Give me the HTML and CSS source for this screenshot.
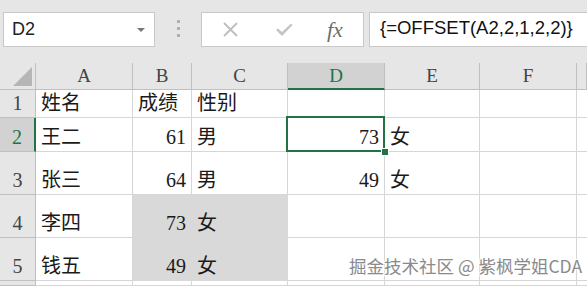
FILE: index.html
```html
<!DOCTYPE html>
<html lang="zh-CN">
<head>
    <meta charset="UTF-8">
    <meta name="viewport" content="width=device-width, initial-scale=1.0">
    <title>OFFSET</title>
    <link rel="stylesheet" href="styles.css">
</head>
<body>
    <!-- Barra de formulas -->
    <div class="toolbar">
        <div class="name-box">
            <span>D2</span>
            <span class="arrow"></span>
        </div>
        <div class="dots"><i></i><i></i><i></i></div>
        <div class="icons">
            <svg class="icon" width="17" height="15" viewBox="0 0 17 15">
                <path d="M2 1 L15 14 M15 1 L2 14" stroke="#bdbdbd" stroke-width="1.8" fill="none"/>
            </svg>
            <svg class="icon" width="18" height="15" viewBox="0 0 18 15">
                <path d="M1 8 L3 6.5 L7 10 L16 1.5 L17.5 3 L7 14 Z" fill="#c4c4c4"/>
            </svg>
            <span class="fx">fx</span>
        </div>
        <div class="formula">{=OFFSET(A2,2,1,2,2)}</div>
    </div>

    <!-- Hoja -->
    <div class="sheet">
        <div class="corner"><span class="tri"></span></div>
        <div class="col-head">A</div>
        <div class="col-head">B</div>
        <div class="col-head">C</div>
        <div class="col-head sel">D</div>
        <div class="col-head">E</div>
        <div class="col-head">F</div>
        <div class="col-head"></div>

        <div class="row-head">1</div>
        <div class="cell">姓名</div>
        <div class="cell">成绩</div>
        <div class="cell">性别</div>
        <div class="cell"></div>
        <div class="cell"></div>
        <div class="cell"></div>
        <div class="cell"></div>

        <div class="row-head sel">2</div>
        <div class="cell">王二</div>
        <div class="cell num">61</div>
        <div class="cell">男</div>
        <div class="cell num active">73</div>
        <div class="cell">女</div>
        <div class="cell"></div>
        <div class="cell"></div>

        <div class="row-head">3</div>
        <div class="cell">张三</div>
        <div class="cell num">64</div>
        <div class="cell">男</div>
        <div class="cell num">49</div>
        <div class="cell">女</div>
        <div class="cell"></div>
        <div class="cell"></div>

        <div class="row-head">4</div>
        <div class="cell">李四</div>
        <div class="cell num picked">73</div>
        <div class="cell picked">女</div>
        <div class="cell"></div>
        <div class="cell"></div>
        <div class="cell"></div>
        <div class="cell"></div>

        <div class="row-head">5</div>
        <div class="cell">钱五</div>
        <div class="cell num picked">49</div>
        <div class="cell picked">女</div>
        <div class="cell"></div>
        <div class="cell"></div>
        <div class="cell"></div>
        <div class="cell"></div>

        <div class="row-head"></div>
        <div class="cell"></div>
        <div class="cell"></div>
        <div class="cell"></div>
        <div class="cell"></div>
        <div class="cell"></div>
        <div class="cell"></div>
        <div class="cell"></div>
    </div>

    <div class="watermark">掘金技术社区 @ 紫枫学姐CDA</div>
</body>
</html>
```

FILE: styles.css
```css
/* General */
body {
    margin: 0;
    width: 587px;
    height: 286px;
    overflow: hidden;
    position: relative;
    background-color: #fff;
    font-family: "Liberation Serif", "Noto Sans CJK SC", serif;
}

/* Barra de formulas */
.toolbar {
    display: flex;
    align-items: flex-start;
    height: 63px;
    box-sizing: border-box;
    padding: 12px 0 0 3px;
    background-color: #e6e6e6;
}

.name-box {
    display: flex;
    align-items: center;
    justify-content: space-between;
    width: 152px;
    height: 35px;
    box-sizing: border-box;
    padding: 0 9px 0 8px;
    background-color: #fff;
    border: 1px solid #c8c8c8;
    font-family: "Liberation Sans", Arial, sans-serif;
    font-size: 18px;
    color: #222;
}

.arrow {
    width: 0;
    height: 0;
    border-left: 4px solid transparent;
    border-right: 4px solid transparent;
    border-top: 4px solid #777;
}

.dots {
    display: flex;
    flex-direction: column;
    align-items: center;
    gap: 4px;
    width: 46px;
    padding-top: 8px;
}

.dots i {
    display: block;
    width: 3px;
    height: 3px;
    background-color: #b0b0b0;
}

.icons {
    display: flex;
    align-items: center;
    gap: 36px;
    width: 163px;
    height: 35px;
    box-sizing: border-box;
    padding-left: 20px;
    background-color: #fff;
    border: 1px solid #c8c8c8;
}

.fx {
    font-family: "Liberation Serif", serif;
    font-style: italic;
    font-size: 22px;
    color: #6e6e6e;
    margin-left: -2px;
}

.formula {
    flex: 1;
    height: 35px;
    box-sizing: border-box;
    margin: 0 -2px 0 5px;
    padding: 4px 0 0 10px;
    background-color: #fff;
    border: 1px solid #c8c8c8;
    font-family: "Liberation Sans", Arial, sans-serif;
    font-size: 18.5px;
    color: #111;
}

/* Hoja */
.sheet {
    display: grid;
    grid-template-columns: 36px 97px 59px 96px 97px 95px 97px 10px;
    grid-template-rows: 27px 28px 34px 43px 43px 43px 5px;
}

.sheet > div {
    box-sizing: border-box;
    border-right: 1px solid #d6d6d6;
    border-bottom: 1px solid #d6d6d6;
}

.corner {
    display: flex;
    align-items: flex-end;
    justify-content: flex-end;
    padding: 0 3px 3px 0;
    background-color: #e6e6e6;
}

.sheet > .corner,
.sheet > .col-head,
.sheet > .row-head {
    border-color: #c0c0c0;
}

.tri {
    width: 0;
    height: 0;
    border-left: 19px solid transparent;
    border-bottom: 19px solid #b6b6b6;
}

.col-head {
    display: flex;
    align-items: center;
    justify-content: center;
    background-color: #e6e6e6;
    font-size: 19px;
    color: #444;
}

.sheet > .col-head.sel {
    background-color: #d2d2d2;
    border-bottom: 2px solid #217346;
    color: #217346;
}

.row-head {
    display: flex;
    align-items: flex-end;
    justify-content: center;
    padding-bottom: 2px;
    background-color: #e6e6e6;
    font-size: 20px;
    color: #444;
}

.sheet > .row-head.sel {
    background-color: #d2d2d2;
    border-right: 2px solid #217346;
    color: #217346;
}

.cell {
    display: flex;
    align-items: flex-end;
    padding: 0 5px 2px 5px;
    font-size: 20px;
    line-height: 24px;
    color: #1a1a1a;
}

.num {
    justify-content: flex-end;
}

/* Rango devuelto por OFFSET */
.sheet > .picked {
    background-color: #d9d9d9;
    border-color: #d9d9d9;
}

/* Celda activa */
.active {
    position: relative;
}

.active::after {
    content: "";
    position: absolute;
    left: -2px;
    top: -2px;
    right: -1px;
    bottom: -1px;
    border: 2px solid #217346;
}

.active::before {
    content: "";
    position: absolute;
    right: -5px;
    bottom: -5px;
    width: 6px;
    height: 6px;
    background-color: #217346;
    border: 1px solid #fff;
    z-index: 1;
}

/* Marca de agua */
.watermark {
    position: absolute;
    left: 349px;
    top: 253px;
    font-family: "Noto Sans CJK SC", "Liberation Sans", sans-serif;
    font-size: 17.5px;
    color: #8a8a8a;
    text-shadow: 1px 1px 0 #fff, -1px -1px 0 #fff, 1px -1px 0 #fff, -1px 1px 0 #fff;
    white-space: nowrap;
}
```
